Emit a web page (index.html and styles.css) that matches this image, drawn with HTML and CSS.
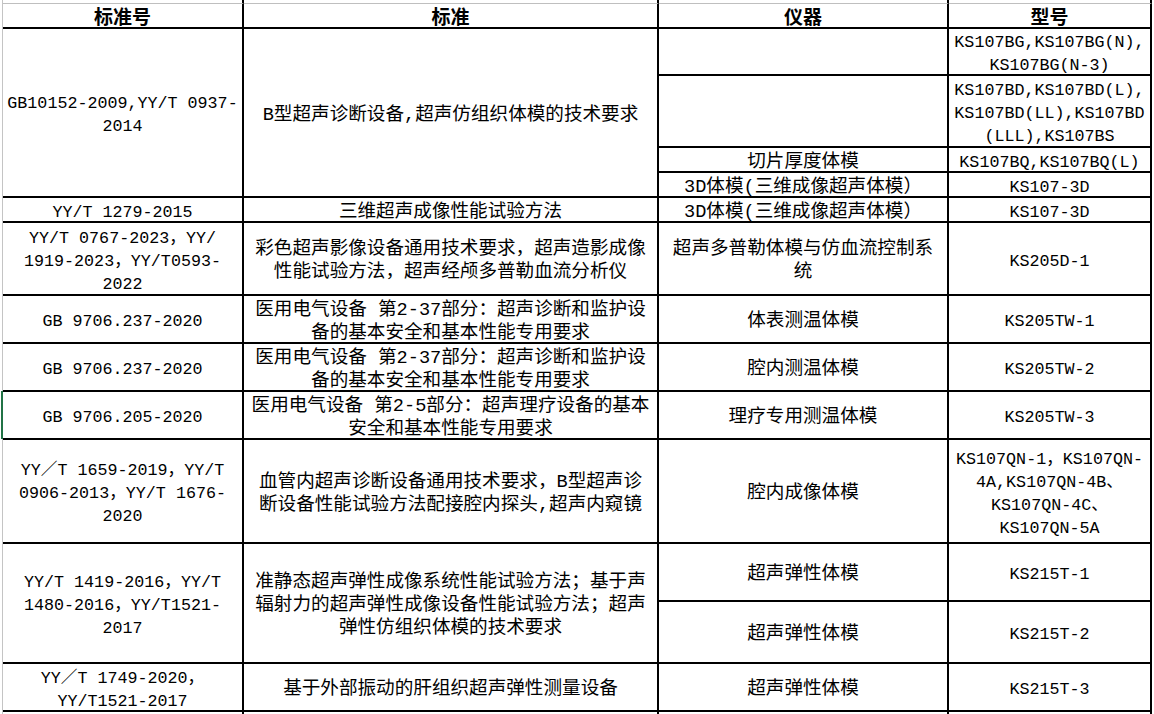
FILE: index.html
```html
<!DOCTYPE html>
<html lang="zh-CN">
<head>
<meta charset="utf-8">
<title>标准与仪器型号</title>
<link rel="stylesheet" href="styles.css">
</head>
<body>
<div class="sheet">
  <div class="cell strip"></div><div class="cell strip"></div><div class="cell strip"></div><div class="cell strip"></div>

  <div class="cell head">标准号</div>
  <div class="cell head">标准</div>
  <div class="cell head">仪器</div>
  <div class="cell head">型号</div>

  <div class="cell code span4">GB10152-2009,YY/T 0937-<br>2014</div>
  <div class="cell text span4">B型超声诊断设备,超声仿组织体模的技术要求</div>
  <div class="cell text"></div>
  <div class="cell code">KS107BG,KS107BG(N),<br>KS107BG(N-3)</div>
  <div class="cell text"></div>
  <div class="cell code">KS107BD,KS107BD(L),<br>KS107BD(LL),KS107BD<br>(LLL),KS107BS</div>
  <div class="cell text">切片厚度体模</div>
  <div class="cell code">KS107BQ,KS107BQ(L)</div>
  <div class="cell text">3D体模(三维成像超声体模）</div>
  <div class="cell code">KS107-3D</div>

  <div class="cell code">YY/T 1279-2015</div>
  <div class="cell text">三维超声成像性能试验方法</div>
  <div class="cell text">3D体模(三维成像超声体模）</div>
  <div class="cell code">KS107-3D</div>

  <div class="cell code">YY/T 0767-2023，YY/<br>1919-2023，YY/T0593-<br>2022</div>
  <div class="cell text">彩色超声影像设备通用技术要求，超声造影成像<br>性能试验方法，超声经颅多普勒血流分析仪</div>
  <div class="cell text">超声多普勒体模与仿血流控制系<br>统</div>
  <div class="cell code">KS205D-1</div>

  <div class="cell code">GB 9706.237-2020</div>
  <div class="cell text">医用电气设备 第2-37部分：超声诊断和监护设<br>备的基本安全和基本性能专用要求</div>
  <div class="cell text">体表测温体模</div>
  <div class="cell code">KS205TW-1</div>

  <div class="cell code">GB 9706.237-2020</div>
  <div class="cell text">医用电气设备 第2-37部分：超声诊断和监护设<br>备的基本安全和基本性能专用要求</div>
  <div class="cell text">腔内测温体模</div>
  <div class="cell code">KS205TW-2</div>

  <div class="cell code">GB 9706.205-2020</div>
  <div class="cell text">医用电气设备 第2-5部分：超声理疗设备的基本<br>安全和基本性能专用要求</div>
  <div class="cell text">理疗专用测温体模</div>
  <div class="cell code">KS205TW-3</div>

  <div class="cell code">YY／T 1659-2019，YY/T<br>0906-2013，YY/T 1676-<br>2020</div>
  <div class="cell text">血管内超声诊断设备通用技术要求，B型超声诊<br>断设备性能试验方法配接腔内探头,超声内窥镜</div>
  <div class="cell text">腔内成像体模</div>
  <div class="cell code">KS107QN-1，KS107QN-<br>4A,KS107QN-4B、<br>KS107QN-4C、<br>KS107QN-5A</div>

  <div class="cell code span2">YY/T 1419-2016，YY/T<br>1480-2016，YY/T1521-<br>2017</div>
  <div class="cell text span2">准静态超声弹性成像系统性能试验方法；基于声<br>辐射力的超声弹性成像设备性能试验方法；超声<br>弹性仿组织体模的技术要求</div>
  <div class="cell text">超声弹性体模</div>
  <div class="cell code">KS215T-1</div>
  <div class="cell text">超声弹性体模</div>
  <div class="cell code">KS215T-2</div>

  <div class="cell code">YY／T 1749-2020，<br>YY/T1521-2017</div>
  <div class="cell text">基于外部振动的肝组织超声弹性测量设备</div>
  <div class="cell text">超声弹性体模</div>
  <div class="cell code">KS215T-3</div>

  <div class="cell tail"></div><div class="cell tail"></div><div class="cell tail"></div><div class="cell tail"></div>
</div>
<div class="select-mark"></div>
</body>
</html>
```

FILE: styles.css
```css
html, body {
  margin: 0;
  padding: 0;
  background: #ffffff;
  overflow: hidden;
}

body {
  position: relative;
  width: 1154px;
  height: 714px;
  color: #000000;
}

.sheet {
  display: grid;
  margin-left: 2px;
  width: 1150px;
  box-sizing: border-box;
  border-left: 1px solid #c4c4c4;
  grid-template-columns: 241px 415px 290px 203px;
  grid-template-rows: 4px 25px 47px 72px 25px 25px 25px 73px 48px 48px 48px 104px 58px 62px 48px 2px;
}

.cell {
  box-sizing: border-box;
  border-right: 2px solid #000000;
  border-bottom: 2px solid #000000;
  display: flex;
  align-items: center;
  justify-content: center;
  text-align: center;
  line-height: 23px;
  white-space: nowrap;
  padding: 5px 0 0 0;
}

.strip {
  border-bottom: 1px solid #bfbfbf;
  padding: 0;
}

.tail {
  border-bottom: none;
  padding: 0;
}

.head {
  font-family: "Noto Sans CJK SC", sans-serif;
  font-weight: 700;
  font-size: 19px;
  line-height: 22px;
  padding: 0;
}

.code {
  font-family: "Liberation Mono", "Noto Sans CJK SC", monospace;
  font-size: 16.7px;
  font-weight: 400;
}

.text {
  font-family: "Liberation Mono", "Noto Sans CJK SC", sans-serif;
  font-size: 18.6px;
  font-weight: 400;
}

.span4 {
  grid-row: span 4;
}

.span2 {
  grid-row: span 2;
}

.select-mark {
  position: absolute;
  left: 1px;
  top: 391px;
  width: 2px;
  height: 48px;
  background: #217346;
}
```
